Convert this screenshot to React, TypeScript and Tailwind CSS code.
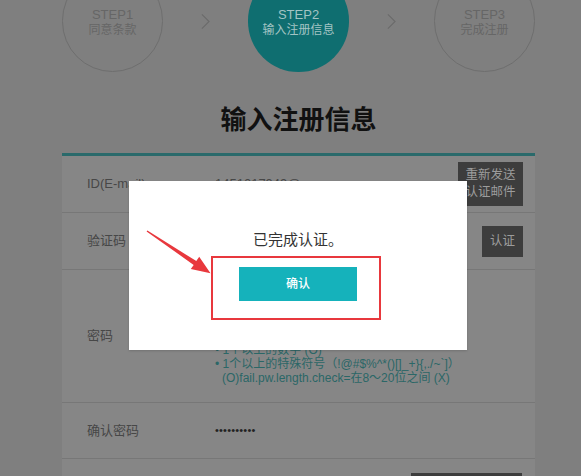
import React from "react";

const cjk = "font-['Liberation_Sans','Noto_Sans_CJK_SC',sans-serif]";
const specialRule = "• 1个以上的特殊符号（!@#$%^*()[]_+}{,./~`]）";

function Chevron() {
  return (
    <svg viewBox="0 0 10 18" className="h-[17px] w-[9px] fill-none stroke-[#6b6b6b]" strokeWidth="1.3">
      <path d="M1 1l8 8-8 8" />
    </svg>
  );
}

function Step({ n, label, active }: { n: number; label: string; active?: boolean }) {
  return (
    <div
      className={
        active
          ? "flex h-[102px] w-[102px] flex-col items-center justify-center rounded-full bg-[#0f6e70] pt-[2px] text-[#a3c4c4]"
          : "flex h-[102px] w-[102px] flex-col items-center justify-center rounded-full border border-[#6e6e6e] pt-[2px] text-[#666666]"
      }
    >
      <span className="text-[13px] leading-[15px]">STEP{n}</span>
      <span className="text-[12px] leading-[16px]">{label}</span>
    </div>
  );
}

function Row({ label, children, className }: { label: string; children?: React.ReactNode; className: string }) {
  return (
    <div className={`flex items-center border-b border-[#777777] ${className}`}>
      <div className="w-[153px] shrink-0 pl-[25px] text-[13px] text-[#474747]">{label}</div>
      <div className="flex flex-1 items-center justify-between pr-[12px]">{children}</div>
    </div>
  );
}

export default function App() {
  return (
    <div className={`relative h-[476px] w-[581px] overflow-hidden bg-[#7f7f7f] ${cjk}`}>
      <div className="ml-[62px] w-[473px]">
        <div className="mt-[-30px] flex items-center justify-center gap-[38px]">
          <Step n={1} label="同意条款" />
          <Chevron />
          <Step n={2} label="输入注册信息" active />
          <Chevron />
          <Step n={3} label="完成注册" />
        </div>

        <h1 className="mt-[30px] text-center text-[26px] font-bold leading-[36px] text-[#111111]">输入注册信息</h1>

        <div className="mt-[15px] border-t-[3px] border-[#2a6a6b] bg-[#868686]">
          <Row label="ID(E-mail)" className="h-[57px]">
            <span className="text-[13px] text-[#474747]">1451017949@qq.com</span>
            <button className="h-[44px] w-[65px] bg-[#3d3d3d] text-[12.5px] leading-[17px] text-[#9c9c9c]">
              重新发送
              <br />
              认证邮件
            </button>
          </Row>
          <Row label="验证码" className="h-[57px]">
            <span className="h-[30px] w-[200px] border border-[#777777]" />
            <button className="h-[31px] w-[41px] bg-[#3d3d3d] text-[12.5px] text-[#9c9c9c]">认证</button>
          </Row>
          <Row label="密码" className="h-[133px]">
            <div className="flex flex-col pt-[30px] text-[12px] leading-[13.7px] text-[#2b6767]">
              <span>• 8～20位字符 (O)</span>
              <span>• 1个以上的英文字母 (O)</span>
              <span>• 1个以上的数字 (O)</span>
              <span>{specialRule}</span>
              <span className="pl-[7px]">(O)fail.pw.length.check=在8～20位之间 (X)</span>
            </div>
          </Row>
          <Row label="确认密码" className="h-[56px]">
            <span className="text-[11px] tracking-[0.2px] text-[#222222]">••••••••••</span>
          </Row>
          <div className="flex h-[60px] justify-end pr-[13px] pt-[14px]">
            <div className="h-[40px] w-[111px] bg-[#3d3d3d]" />
          </div>
        </div>
      </div>

      <div className="absolute left-[129px] top-[181px] flex h-[169px] w-[338px] flex-col items-center bg-white pt-[48px] shadow-[0_1px_2px_rgba(0,0,0,0.15)]">
        <p className="text-[15px] leading-[22px] text-[#333333]">已完成认证。</p>
        <div className="relative mt-[16px]">
          <button className="h-[34px] w-[118px] bg-[#15b2bb] text-[12px] font-medium text-white">确认</button>
          <div className="absolute bottom-[-19px] left-[-28px] right-[-24px] top-[-11px] border-2 border-[#e8383d]" />
        </div>
      </div>

      <svg className="pointer-events-none absolute left-0 top-0" width="581" height="476" viewBox="0 0 581 476">
        <polygon
          fill="#e8383d"
          points="146.6,231.5 147.4,230.5 196.3,261.1 199.2,256.8 210.5,273.3 190.8,269.1 193.7,264.9"
        />
      </svg>
    </div>
  );
}
